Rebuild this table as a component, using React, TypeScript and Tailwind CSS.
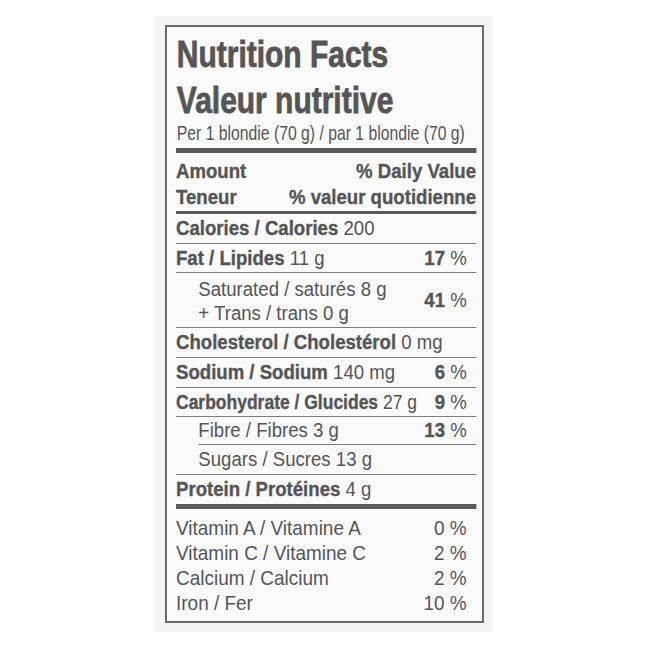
const FONT = "font-['Liberation_Sans','Arimo',Arial,sans-serif]";
const HEAVY = "[-webkit-text-stroke:0.35px_#555555]";

type Row = {
  bold: string;
  rest?: string;
  pct?: string;
  h: string;
  squeeze?: boolean;
};

const ROWS: Row[] = [
  { bold: "Calories / Calories", rest: " 200", h: "h-[30px]" },
  { bold: "Fat / Lipides", rest: " 11 g", pct: "17", h: "h-[29px]" },
];

const ROWS2: Row[] = [
  { bold: "Cholesterol / Cholestérol", rest: " 0 mg", h: "h-[30px]" },
  { bold: "Sodium / Sodium", rest: " 140 mg", pct: "6", h: "h-[30px]" },
  { bold: "Carbohydrate / Glucides", rest: " 27 g", pct: "9", h: "h-[29px]", squeeze: true },
];

const VITAMINS = [
  ["Vitamin A / Vitamine A", "0"],
  ["Vitamin C / Vitamine C", "2"],
  ["Calcium / Calcium", "2"],
  ["Iron / Fer", "10"],
];

function Pct({ value }: { value: string }) {
  return (
    <span className="shrink-0 whitespace-nowrap pr-[10px]">
      <span className={`font-bold ${HEAVY}`}>{value}</span> %
    </span>
  );
}

function NutrientRow({ row }: { row: Row }) {
  return (
    <div className={`flex items-center justify-between border-b border-[#7c7c7c] leading-[29px] ${row.h}`}>
      <span
        className={`min-w-0 flex-1 whitespace-nowrap ${row.squeeze ? "origin-left scale-x-[0.94]" : ""}`}
      >
        <span className={`font-bold ${HEAVY}`}>{row.bold}</span>
        {row.rest}
      </span>
      {row.pct ? <Pct value={row.pct} /> : null}
    </div>
  );
}

export default function App() {
  return (
    <div className="min-h-[650px] w-[650px] bg-white pt-4">
      <div className="ml-[154px] w-[339px] bg-[#f3f4f6] pb-[9px] pl-[11px] pr-[9px] pt-[9px]">
        <div
          className={`${FONT} border-2 border-[#6a6a6a] bg-[#fafafb] pb-[5px] pl-[9px] pr-[7px] pt-[5px] text-[20px] text-[#555555]`}
        >
          <div className="origin-left scale-x-[0.81] whitespace-nowrap pl-px text-[37px] font-bold leading-[46px] [-webkit-text-stroke:0.8px_#555555]">
            <div>Nutrition Facts</div>
            <div>Valeur nutritive</div>
          </div>
          <div className="-mt-[2px] origin-left scale-x-[0.75] whitespace-nowrap pl-px text-[21px] leading-[21px]">
            Per 1 blondie (70 g) / par 1 blondie (70 g)
          </div>

          <div className="w-[322.6px] origin-left scale-x-[0.93]">
            <div className="mt-[5px] h-[5px] bg-[#5a5a5a]" />

            <div className={`pt-[5px] font-bold leading-[26px] ${HEAVY}`}>
              <div className="flex justify-between">
                <span>Amount</span>
                <span>% Daily Value</span>
              </div>
              <div className="flex justify-between">
                <span>Teneur</span>
                <span>% valeur quotidienne</span>
              </div>
            </div>

            <div className="mt-px h-[3px] bg-[#5a5a5a]" />

            {ROWS.map((row) => (
              <NutrientRow key={row.bold} row={row} />
            ))}

            <div className="flex h-[55px] items-center justify-between border-b border-[#7c7c7c]">
              <div className="self-start pl-[24px] pt-[4px] leading-[24px]">
                <div>Saturated / saturés 8 g</div>
                <div>+ Trans / trans 0 g</div>
              </div>
              <span className="leading-[29px]">
                <Pct value="41" />
              </span>
            </div>

            {ROWS2.map((row) => (
              <NutrientRow key={row.bold} row={row} />
            ))}

            <div className="ml-[24px] flex h-[28px] items-center justify-between border-b border-[#7c7c7c] leading-[27px]">
              <span>Fibre / Fibres 3 g</span>
              <Pct value="13" />
            </div>
            <div className="flex h-[30px] items-center border-b border-[#7c7c7c] pl-[24px] leading-[29px]">
              Sugars / Sucres 13 g
            </div>
            <div className="flex h-[29px] items-center whitespace-pre leading-[29px]">
              <span className={`font-bold ${HEAVY}`}>Protein / Protéines</span> 4 g
            </div>

            <div className="h-[5px] bg-[#5a5a5a]" />

            <div className="pt-[7px] text-[20.4px] leading-[25px]">
              {VITAMINS.map(([label, pct]) => (
                <div key={label} className="flex justify-between">
                  <span>{label}</span>
                  <span className="pr-[10px]">{pct} %</span>
                </div>
              ))}
            </div>
          </div>
        </div>
      </div>
    </div>
  );
}
